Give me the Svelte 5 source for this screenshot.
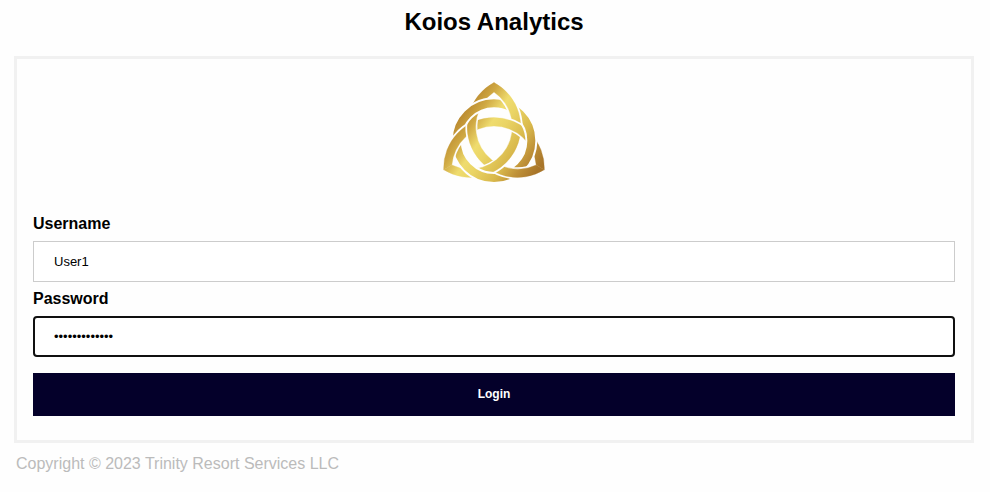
<script>
  let username = 'User1';
  let password = 'trinity-login';

  const turns = [0, 120, 240];

  // arc on a circle centred at (0, cy), angles in degrees from twelve o'clock
  const arc = (cy, r, from, to) => {
    const point = deg => {
      const a = deg * Math.PI / 180;
      return `${r * Math.sin(a)} ${cy - r * Math.cos(a)}`;
    };
    return `M${point(from)}A${r} ${r} 0 0 1 ${point(to)}`;
  };

  const overRing = arc(82, 139, -85, -20);
  const overStrand = arc(82, 139, 5, 60);
  const ringOver = arc(0, 112, 60, 125);

  const handleSubmit = (event) => {
    event.preventDefault();
  };
</script>

<main class="page">
  <h2 class="title">Koios Analytics</h2>

  <form class="login" on:submit={handleSubmit}>
    <div class="brand">
      <svg class="logo" viewBox="-150 -173 300 300" role="img" aria-label="Trinity knot">
        <defs>
          <linearGradient id="gold" gradientUnits="userSpaceOnUse" x1="-110" y1="-115" x2="150" y2="60">
            <stop offset="0" stop-color="#b07d2a" />
            <stop offset="0.1" stop-color="#bb8b31" />
            <stop offset="0.23" stop-color="#cfa843" />
            <stop offset="0.38" stop-color="#efdc6e" />
            <stop offset="0.5" stop-color="#ead465" />
            <stop offset="0.7" stop-color="#d9b94c" />
            <stop offset="0.85" stop-color="#bf9138" />
            <stop offset="1" stop-color="#a87529" />
          </linearGradient>
          <mask id="strand-gaps" maskUnits="userSpaceOnUse" x="-180" y="-180" width="360" height="360">
            <rect class="solid" x="-180" y="-180" width="360" height="360" />
            <path class="gap" transform="rotate(240)" d={overStrand} />
            <path class="gap" d={ringOver} />
          </mask>
          <mask id="ring-gaps" maskUnits="userSpaceOnUse" x="-180" y="-180" width="360" height="360">
            <rect class="solid" x="-180" y="-180" width="360" height="360" />
            {#each turns as turn}
              <path class="gap" transform="rotate({turn})" d={overRing} />
            {/each}
          </mask>
          <mask id="knot" maskUnits="userSpaceOnUse" x="-180" y="-180" width="360" height="360">
            {#each turns as turn}
              <g transform="rotate({turn})">
                <path
                  class="strand"
                  mask="url(#strand-gaps)"
                  d="M-150.9 87.1A151 151 0 1 1 150.9 87.1L126.6 73.1A127 127 0 0 0 -126.6 73.1Z"
                />
              </g>
            {/each}
            <circle class="ring" r="112" mask="url(#ring-gaps)" />
          </mask>
        </defs>
        <rect x="-180" y="-180" width="360" height="360" fill="url(#gold)" mask="url(#knot)" />
      </svg>
    </div>

    <label for="username">Username</label>
    <input id="username" class="field" type="text" bind:value={username} />

    <label for="password">Password</label>
    <input id="password" class="field active" type="password" bind:value={password} />

    <button class="submit" type="submit">Login</button>
  </form>

  <footer class="copyright">Copyright © 2023 Trinity Resort Services LLC</footer>
</main>

<style>
  :global(body) {
    margin: 0;
    background: #fefefe;
  }

  .page {
    padding: 8px 16px 8px 14px;
    font-family: Arial, "Liberation Sans", sans-serif;
    font-size: 16px;
    color: #000;
  }

  .title {
    margin: 0 0 20px;
    font-size: 24px;
    line-height: 28px;
    text-align: center;
  }

  .login {
    display: flex;
    flex-direction: column;
    padding: 24px 16px;
    border: 3px solid #f1f1f1;
  }

  .brand {
    display: flex;
    justify-content: center;
    margin-bottom: 32px;
  }

  .logo {
    width: 100px;
    height: 100px;
    overflow: visible;
  }

  .solid {
    fill: #fff;
  }

  .strand {
    fill: #fff;
    stroke: #fff;
    stroke-width: 1;
  }

  .ring {
    fill: none;
    stroke: #fff;
    stroke-width: 24;
  }

  .gap {
    fill: none;
    stroke: #000;
    stroke-width: 36;
  }

  label {
    line-height: 18px;
    font-weight: bold;
  }

  .field {
    box-sizing: border-box;
    width: 100%;
    height: 41px;
    margin: 8px 0;
    padding: 12px 20px;
    border: 1px solid #ccc;
    background: #fff;
    font-family: inherit;
    font-size: 13px;
    color: #000;
  }

  .field:focus {
    outline: none;
  }

  .active {
    padding: 11px 19px;
    border: 2px solid #101010;
    border-radius: 4px;
  }

  .submit {
    width: 100%;
    height: 43px;
    margin-top: 8px;
    padding: 14px 20px;
    border: none;
    background: #04002a;
    font-family: inherit;
    font-size: 12px;
    font-weight: bold;
    line-height: 15px;
    color: #fff;
    cursor: pointer;
  }

  .submit:hover {
    opacity: 0.8;
  }

  .copyright {
    padding: 12px 2px;
    line-height: 18px;
    color: #bbb;
  }
</style>
